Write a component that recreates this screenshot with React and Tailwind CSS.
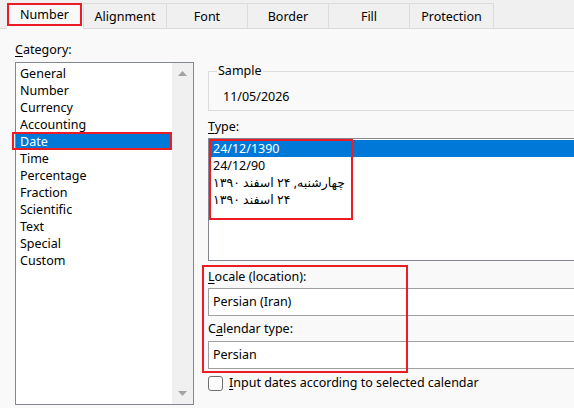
import React from 'react';

const categories = [
  'General', 'Number', 'Currency', 'Accounting', 'Date', 'Time',
  'Percentage', 'Fraction', 'Scientific', 'Text', 'Special', 'Custom',
];

const tabs = [
  { label: 'Alignment', cls: 'w-[83px] border-l' },
  { label: 'Font', cls: 'w-[81px] border-l' },
  { label: 'Border', cls: 'w-[81px] border-l' },
  { label: 'Fill', cls: 'w-[81px] border-l' },
  { label: 'Protection', cls: 'w-[85px] border-l border-r' },
];

function Arrow({ down }) {
  return (
    <svg width="9" height="5" viewBox="0 0 9 5">
      <polygon points={down ? '0,0 9,0 4.5,5' : '0,5 9,5 4.5,0'} fill="#a3a3a3" />
    </svg>
  );
}

export default function App() {
  return (
    <div
      className="w-[574px] h-[408px] overflow-hidden bg-[#f9f9f9] text-[12.5px] text-black relative"
      style={{ fontFamily: '"Noto Sans", "DejaVu Sans", sans-serif' }}
    >
      {/* Tab strip */}
      <div className="h-[29px] bg-[#f0f0f0] border-b border-[#dadada] flex items-start pt-[3px] pl-[7px]">
        <div className="w-[76px] h-[26px] bg-[#f9f9f9] relative z-10">
          <div className="w-[75px] h-[23px] border-2 border-[#ed1c24] flex items-center justify-center pt-[2px]">
            Number
          </div>
        </div>
        {tabs.map((t) => (
          <div
            key={t.label}
            className={`${t.cls} h-[25px] border-t border-[#dcdcdc] flex items-center justify-center pt-[2px]`}
          >
            {t.label}
          </div>
        ))}
      </div>

      <div className="flex items-start">
        {/* Category column */}
        <div className="pl-[15px] pt-[13px] w-[208px] shrink-0">
          <div className="h-[16px] leading-[16px] mb-[4px]">
            <span className="underline underline-offset-2">C</span>ategory:
          </div>
          <div className="w-[179px] h-[343px] border border-[#828790] bg-white flex">
            <div className="flex-1 pt-[2px]">
              {categories.map((c) => (
                <div
                  key={c}
                  className={`h-[17px] leading-[17px] pl-[4px] relative ${c === 'Date' ? 'bg-[#0078d7] text-white' : ''}`}
                >
                  {c}
                  {c === 'Date' && (
                    <div className="absolute -left-[4px] -top-[1px] w-[160px] h-[18px] border-2 border-[#ed1c24]" />
                  )}
                </div>
              ))}
            </div>
            <div className="w-[21px] bg-[#f0f0f0] flex flex-col items-center justify-between pt-[8px] pb-[8px]">
              <Arrow />
              <Arrow down />
            </div>
          </div>
        </div>

        {/* Right column */}
        <div className="w-[400px] shrink-0 pt-[34px]">
          <fieldset className="border border-[#dcdcdc] px-[14px] pt-[10px] pb-[5px]">
            <legend className="ml-[-6px] px-[1px] leading-[16px]">Sample</legend>
            <div className="leading-[16px] h-[16px]">11/05/2026</div>
          </fieldset>

          <div className="mt-[8px] h-[16px] leading-[16px] mb-[3px]">
            <span className="underline underline-offset-2">T</span>ype:
          </div>
          <div className="h-[123px] border border-[#828790] bg-white pt-[1px] pl-[1px] relative">
            <div className="h-[17px] leading-[17px] pl-[3px] bg-[#0078d7] text-white">24/12/1390</div>
            <div className="h-[17px] leading-[17px] pl-[3px]">24/12/90</div>
            <div className="h-[17px] leading-[17px] pl-[3px]">
              <span dir="rtl">چهارشنبه, ۲۴ اسفند ۱۳۹۰</span>
            </div>
            <div className="h-[17px] leading-[17px] pl-[3px]">
              <span dir="rtl">۲۴ اسفند ۱۳۹۰</span>
            </div>
            <div className="absolute left-0 top-0 w-[144px] h-[81px] border-2 border-[#ed1c24]" />
          </div>

          <div className="mt-[8px] relative">
            <div className="h-[16px] leading-[16px] mb-[3px]">
              <span className="underline underline-offset-2">L</span>ocale (location):
            </div>
            <div className="h-[28px] border border-[#a0a0a0] bg-white pl-[4px] flex items-center">
              Persian (Iran)
            </div>
            <div className="mt-[5px] h-[16px] leading-[16px] mb-[4px]">
              C<span className="underline underline-offset-2">a</span>lendar type:
            </div>
            <div className="h-[28px] border border-[#a0a0a0] bg-white pl-[4px] flex items-center">
              Persian
            </div>
            <div className="absolute -left-[6px] -top-[4px] w-[206px] h-[108px] border-2 border-[#ed1c24]" />
          </div>

          <div className="mt-[6px] flex items-center h-[16px]">
            <div className="w-[15px] h-[15px] border border-[#6e6e6e] rounded-[3px] bg-[#fdfdfd]" />
            <span className="ml-[6px] leading-[16px]">
              <span className="underline underline-offset-2">I</span>nput dates according to selected calendar
            </span>
          </div>
        </div>
      </div>
    </div>
  );
}
